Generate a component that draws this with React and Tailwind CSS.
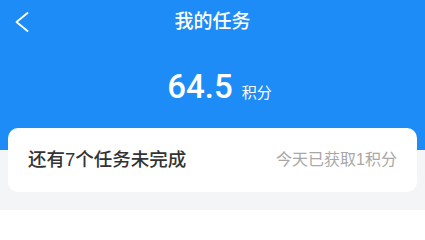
const font = { fontFamily: '"Liberation Sans", "Noto Sans CJK SC", sans-serif' };

function BackIcon() {
  return (
    <svg width="16" height="22" viewBox="0 0 16 22" fill="none" stroke="currentColor" strokeWidth="1.8" strokeLinecap="round" strokeLinejoin="round">
      <polyline points="13.5,2 2.5,11 13.5,20" />
    </svg>
  );
}

export default function App() {
  return (
    <div className="w-[425px] h-[210px] bg-[#f4f5f7] overflow-hidden" style={font}>
      {/* blue header */}
      <div className="h-[150px] bg-[#1e8cf6] text-white">
        <div className="relative h-[44px] flex items-center justify-center">
          <button className="absolute left-[14px] top-[11px] text-white">
            <BackIcon />
          </button>
          <span className="text-[19px] font-medium">我的任务</span>
        </div>
        <div className="flex items-baseline justify-center pt-[26px] pl-[14px]">
          <span className="font-['Roboto',sans-serif] text-[33px] leading-none font-medium">64.5</span>
          <span className="ml-[9px] text-[15px] leading-none">积分</span>
        </div>
      </div>

      {/* summary card */}
      <div className="relative -mt-[22px] mx-[8px] h-[64px] bg-white rounded-[10px] flex items-center justify-between px-[20px]">
        <span className="text-[18.5px] font-medium text-[#333333]">还有7个任务未完成</span>
        <span className="text-[16px] text-[#a8a8a8]">今天已获取1积分</span>
      </div>
    </div>
  );
}
